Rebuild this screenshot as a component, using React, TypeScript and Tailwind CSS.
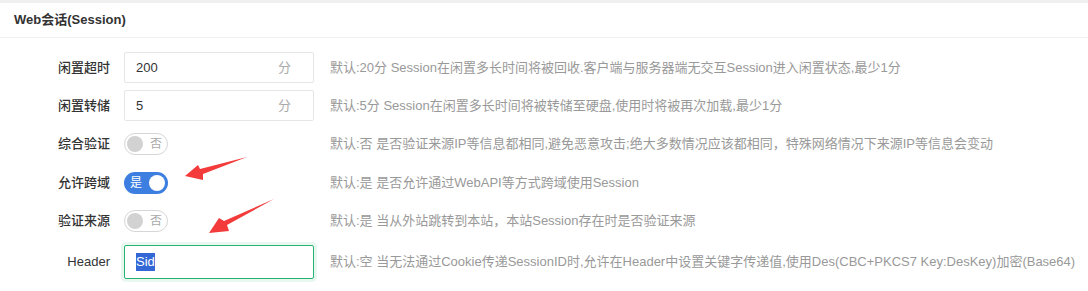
import React from 'react'

const font = { fontFamily: '"Liberation Sans", "Noto Sans CJK SC", sans-serif' }

type Row =
  | { label: string; kind: 'input'; value: string; unit?: string; desc: string; focus?: boolean }
  | { label: string; kind: 'toggle'; on: boolean; desc: string }

const rows: Row[] = [
  { label: '闲置超时', kind: 'input', value: '200', unit: '分', desc: '默认:20分 Session在闲置多长时间将被回收.客户端与服务器端无交互Session进入闲置状态,最少1分' },
  { label: '闲置转储', kind: 'input', value: '5', unit: '分', desc: '默认:5分 Session在闲置多长时间将被转储至硬盘,使用时将被再次加载,最少1分' },
  { label: '综合验证', kind: 'toggle', on: false, desc: '默认:否 是否验证来源IP等信息都相同,避免恶意攻击;绝大多数情况应该都相同，特殊网络情况下来源IP等信息会变动' },
  { label: '允许跨域', kind: 'toggle', on: true, desc: '默认:是 是否允许通过WebAPI等方式跨域使用Session' },
  { label: '验证来源', kind: 'toggle', on: false, desc: '默认:是 当从外站跳转到本站，本站Session存在时是否验证来源' },
  { label: 'Header', kind: 'input', value: 'Sid', focus: true, desc: '默认:空 当无法通过Cookie传递SessionID时,允许在Header中设置关键字传递值,使用Des(CBC+PKCS7 Key:DesKey)加密(Base64)' },
]

function Toggle({ on }: { on: boolean }) {
  if (on) {
    return (
      <div className="w-[44px] h-[22px] rounded-full bg-[#3d7fe0] flex items-center justify-between pl-[6px] pr-[3px]">
        <span className="text-[12px] text-white leading-none">是</span>
        <span className="w-[16px] h-[16px] rounded-full bg-white" />
      </div>
    )
  }
  return (
    <div className="w-[44px] h-[22px] rounded-full border border-[#d6d6d6] bg-white flex items-center justify-between pl-[2px] pr-[5px]">
      <span className="w-[16px] h-[16px] rounded-full bg-[#d2d2d2]" />
      <span className="text-[12px] text-[#aaa] leading-none">否</span>
    </div>
  )
}

export default function App() {
  return (
    <div className="relative w-full min-h-[291px] bg-white text-[13px]" style={font}>
      <div className="h-[3px] bg-[#efefef]" />
      <div className="h-[35px] px-[14px] flex items-center border-b border-[#f1f1f1] font-bold text-[#333]">
        Web会话(Session)
      </div>

      <div className="pt-[14px] flex flex-col gap-[7px]">
        {rows.map((r, i) => (
          <div
            key={r.label}
            className={`flex items-center ${r.kind === 'input' && r.focus ? 'h-[34px] mt-[2px]' : 'h-[31px]'} ${i === 3 ? 'mt-[1px]' : ''}`}
          >
            <div className="w-[110px] text-right font-medium text-[#333] shrink-0">{r.label}</div>
            <div className="ml-[14px] w-[190px] shrink-0 flex items-center">
              {r.kind === 'input' ? (
                r.focus ? (
                  <div className="w-full h-[34px] border border-[#25b36f] rounded-[2px] ring-[3px] ring-[#e8f7f0] flex items-center pl-[11px]">
                    <span className="bg-[#3367d6] text-white leading-[18px]">{r.value}</span>
                  </div>
                ) : (
                  <div className="w-full h-[31px] border border-[#e6e6e6] rounded-[2px] flex items-center justify-between pl-[11px] pr-[22px]">
                    <span className="text-[#333]">{r.value}</span>
                    <span className="text-[#aaa]">{r.unit}</span>
                  </div>
                )
              ) : (
                <Toggle on={r.on} />
              )}
            </div>
            <div className="ml-[16px] text-[#999] whitespace-nowrap">{r.desc}</div>
          </div>
        ))}
      </div>

      <svg className="absolute left-0 top-0 pointer-events-none" width="1088" height="291" viewBox="0 0 1088 291">
        <polygon points="185,176 198,165 200,169 247,157 203,174 203,180" fill="#f33b3b" />
        <polygon points="209,233 219,218 224,221 274,199 227,225 229,231" fill="#f33b3b" />
      </svg>
    </div>
  )
}
